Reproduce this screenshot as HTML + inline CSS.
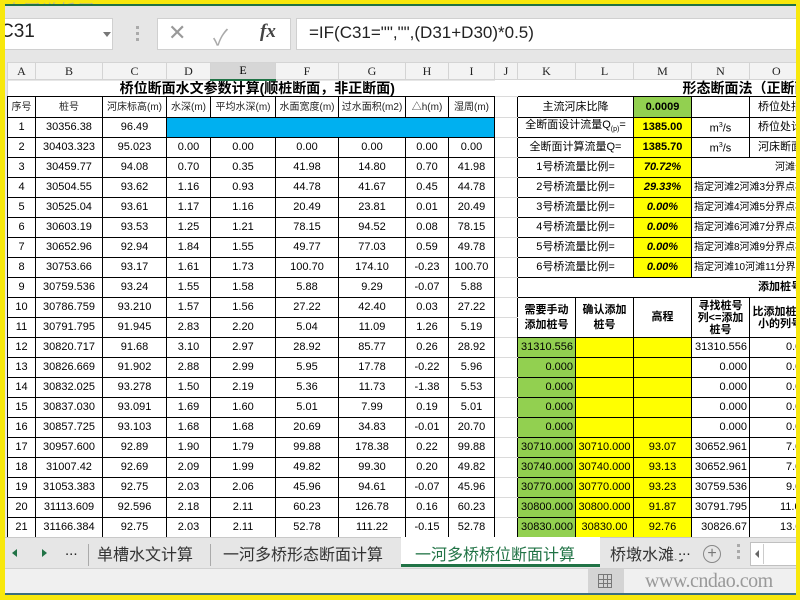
<!DOCTYPE html>
<html><head><meta charset="utf-8">
<style>
*{box-sizing:border-box}
body{margin:0;width:800px;height:600px;overflow:hidden;background:#f8e80c;font-family:"Liberation Sans","Noto Sans CJK SC",sans-serif;position:relative}
#app{position:absolute;left:5px;top:4px;width:791px;height:591px;background:#e6e6e6;overflow:hidden}
.abs{position:absolute}
table{border-collapse:collapse;table-layout:fixed;position:absolute;left:2px;top:58px;width:880px;font-size:11px;color:#000}
td{border:1px solid #000;padding:0 2px;white-space:nowrap;overflow:hidden;text-align:center;background:#fff;font-family:"Liberation Sans","Noto Sans CJK SC",sans-serif;line-height:13px;height:20px}
tr.ch td{height:17px;background:#f3f3f3;border:1px solid #d4d4d4;font-family:"Liberation Serif",serif;font-size:12px;color:#222}
tr.ch td.sel{background:#d6d6d6;border-bottom:2px solid #217346;color:#000}
tr.tt td{height:17px;border-top:none;border-left:none;border-right:none;font-weight:bold;font-size:14px;line-height:14px}
tr.hd td{height:21px}
tr.hd td.h{font-size:10px;color:#222}
td.j{border-left:none;border-right:none;border-top:1px solid #dadada;border-bottom:1px solid #dadada}
td.g{background:#92d050}
td.y{background:#ffff00}
td.b{background:#00b0f0}
td.r{text-align:right}
td.l{text-align:left}
td.bd{font-weight:bold}
td.it{font-weight:bold;font-style:italic}
td.s{font-size:10px}
td.lb{font-size:11px}
</style></head><body>
<div class="abs" style="left:6px;top:0;font-family:'Noto Serif CJK SC',serif;font-size:16px;color:#aaa;letter-spacing:2px;line-height:20px">中国道桥网</div>
<div id="app">
  <div class="abs" style="left:0;top:0;width:791px;height:2px;background:#217346"></div>
  <div class="abs" style="left:0;top:14px;width:108px;height:32px;background:#fff;border:1px solid #d0d0d0;border-left:none"></div>
  <div class="abs" style="left:-5px;top:17px;font-size:19px;color:#222">C31</div>
  <div class="abs" style="left:98px;top:28px;width:0;height:0;border-left:4px solid transparent;border-right:4px solid transparent;border-top:5px solid #777"></div>
  <div class="abs" style="left:131px;top:22px;width:3px;height:18px;background:repeating-linear-gradient(#aaa 0 3px,transparent 3px 6px)"></div>
  <div class="abs" style="left:152px;top:14px;width:134px;height:32px;background:#fff;border:1px solid #d0d0d0"></div>
  <div class="abs" style="left:163px;top:16px;font-size:22px;color:#999">✕</div>
  <div class="abs" style="left:208px;top:16px;font-size:22px;color:#aaa">✓</div>
  <div class="abs" style="left:255px;top:17px;font-size:19px;font-style:italic;font-weight:bold;font-family:'Liberation Serif',serif;color:#444">fx</div>
  <div class="abs" style="left:291px;top:14px;width:510px;height:32px;background:#fff;border:1px solid #d0d0d0"></div>
  <div class="abs" style="left:304px;top:19px;font-size:17px;color:#222">=IF(C31="","",(D31+D30)*0.5)</div>

<table>
<colgroup><col style="width:28px"><col style="width:67px"><col style="width:64px"><col style="width:44px"><col style="width:65px"><col style="width:63px"><col style="width:67px"><col style="width:43px"><col style="width:46px"><col style="width:23px"><col style="width:58px"><col style="width:58px"><col style="width:58px"><col style="width:58px"><col style="width:138px"></colgroup>
<tr class="ch"><td>A</td><td>B</td><td>C</td><td>D</td><td class="sel">E</td><td>F</td><td>G</td><td>H</td><td>I</td><td>J</td><td>K</td><td>L</td><td>M</td><td>N</td><td style="text-align:left;padding-left:22px">O</td></tr>
<tr class="tt"><td colspan="9" style="border-left:1px solid #d4d4d4;padding-left:14px">桥位断面水文参数计算(顺桩断面，非正断面)</td><td class="j" style="border-top:none"></td><td colspan="5" style="text-align:left;padding-left:165px">形态断面法（正断面法）</td></tr>
<tr class="hd"><td class="h">序号</td><td class="h">桩号</td><td class="h">河床标高(m)</td><td class="h">水深(m)</td><td class="h">平均水深(m)</td><td class="h">水面宽度(m)</td><td class="h">过水面积(m2)</td><td class="h">△h(m)</td><td class="h">湿周(m)</td><td class="j"></td><td colspan="2" class="lb">主流河床比降</td><td class="g bd">0.0009</td><td></td><td class="l lb" style="padding-left:8px">桥位处指定</td></tr>
<tr><td>1</td><td>30356.38</td><td>96.49</td><td colspan="6" class="b"></td><td class="j"></td><td colspan="2" class="lb">全断面设计流量Q<sub style="font-size:7px">(p)</sub>=</td><td class="y bd">1385.00</td><td>m<sup style="font-size:7px">3</sup>/s</td><td class="l lb" style="padding-left:8px">桥位处计算</td></tr>
<tr><td>2</td><td>30403.323</td><td>95.023</td><td>0.00</td><td>0.00</td><td>0.00</td><td>0.00</td><td>0.00</td><td>0.00</td><td class="j"></td><td colspan="2" class="lb">全断面计算流量Q=</td><td class="y bd">1385.70</td><td>m<sup style="font-size:7px">3</sup>/s</td><td class="l lb" style="padding-left:8px">河床断面</td></tr>
<tr><td>3</td><td>30459.77</td><td>94.08</td><td>0.70</td><td>0.35</td><td>41.98</td><td>14.80</td><td>0.70</td><td>41.98</td><td class="j"></td><td colspan="2" class="lb">1号桥流量比例=</td><td class="y it">70.72%</td><td colspan="2" class="l s" style="padding-left:83px">河滩分界</td></tr>
<tr><td>4</td><td>30504.55</td><td>93.62</td><td>1.16</td><td>0.93</td><td>44.78</td><td>41.67</td><td>0.45</td><td>44.78</td><td class="j"></td><td colspan="2" class="lb">2号桥流量比例=</td><td class="y it">29.33%</td><td colspan="2" class="l s">指定河滩2河滩3分界点桩号</td></tr>
<tr><td>5</td><td>30525.04</td><td>93.61</td><td>1.17</td><td>1.16</td><td>20.49</td><td>23.81</td><td>0.01</td><td>20.49</td><td class="j"></td><td colspan="2" class="lb">3号桥流量比例=</td><td class="y it">0.00%</td><td colspan="2" class="l s">指定河滩4河滩5分界点桩号</td></tr>
<tr><td>6</td><td>30603.19</td><td>93.53</td><td>1.25</td><td>1.21</td><td>78.15</td><td>94.52</td><td>0.08</td><td>78.15</td><td class="j"></td><td colspan="2" class="lb">4号桥流量比例=</td><td class="y it">0.00%</td><td colspan="2" class="l s">指定河滩6河滩7分界点桩号</td></tr>
<tr><td>7</td><td>30652.96</td><td>92.94</td><td>1.84</td><td>1.55</td><td>49.77</td><td>77.03</td><td>0.59</td><td>49.78</td><td class="j"></td><td colspan="2" class="lb">5号桥流量比例=</td><td class="y it">0.00%</td><td colspan="2" class="l s">指定河滩8河滩9分界点桩号</td></tr>
<tr><td>8</td><td>30753.66</td><td>93.17</td><td>1.61</td><td>1.73</td><td>100.70</td><td>174.10</td><td>-0.23</td><td>100.70</td><td class="j"></td><td colspan="2" class="lb">6号桥流量比例=</td><td class="y it">0.00%</td><td colspan="2" class="l s">指定河滩10河滩11分界桩号</td></tr>
<tr><td>9</td><td>30759.536</td><td>93.24</td><td>1.55</td><td>1.58</td><td>5.88</td><td>9.29</td><td>-0.07</td><td>5.88</td><td class="j"></td><td colspan="5" class="l bd" style="padding-left:240px">添加桩号</td></tr>
<tr><td>10</td><td>30786.759</td><td>93.210</td><td>1.57</td><td>1.56</td><td>27.22</td><td>42.40</td><td>0.03</td><td>27.22</td><td class="j"></td>
 <td rowspan="2" style="font-weight:bold;white-space:normal;line-height:15px">需要手动添加桩号</td><td rowspan="2" style="font-weight:bold;white-space:normal;line-height:15px">确认添加桩号</td><td rowspan="2" class="bd">高程</td><td rowspan="2" style="font-weight:bold;white-space:normal;line-height:12px;padding:0 4px">寻找桩号列&lt;=添加桩号</td><td rowspan="2" class="l" style="font-weight:bold;white-space:normal;line-height:12px;padding:0"><div style="width:60px;text-align:center">比添加桩号小的列号</div></td></tr>
<tr><td>11</td><td>30791.795</td><td>91.945</td><td>2.83</td><td>2.20</td><td>5.04</td><td>11.09</td><td>1.26</td><td>5.19</td><td class="j"></td></tr>
<tr><td>12</td><td>30820.717</td><td>91.68</td><td>3.10</td><td>2.97</td><td>28.92</td><td>85.77</td><td>0.26</td><td>28.92</td><td class="j"></td><td class="g r">31310.556</td><td class="y"></td><td class="y"></td><td class="r">31310.556</td><td class="l" style="padding-left:36px">0.00</td></tr>
<tr><td>13</td><td>30826.669</td><td>91.902</td><td>2.88</td><td>2.99</td><td>5.95</td><td>17.78</td><td>-0.22</td><td>5.96</td><td class="j"></td><td class="g r">0.000</td><td class="y"></td><td class="y"></td><td class="r">0.000</td><td class="l" style="padding-left:36px">0.00</td></tr>
<tr><td>14</td><td>30832.025</td><td>93.278</td><td>1.50</td><td>2.19</td><td>5.36</td><td>11.73</td><td>-1.38</td><td>5.53</td><td class="j"></td><td class="g r">0.000</td><td class="y"></td><td class="y"></td><td class="r">0.000</td><td class="l" style="padding-left:36px">0.00</td></tr>
<tr><td>15</td><td>30837.030</td><td>93.091</td><td>1.69</td><td>1.60</td><td>5.01</td><td>7.99</td><td>0.19</td><td>5.01</td><td class="j"></td><td class="g r">0.000</td><td class="y"></td><td class="y"></td><td class="r">0.000</td><td class="l" style="padding-left:36px">0.00</td></tr>
<tr><td>16</td><td>30857.725</td><td>93.103</td><td>1.68</td><td>1.68</td><td>20.69</td><td>34.83</td><td>-0.01</td><td>20.70</td><td class="j"></td><td class="g r">0.000</td><td class="y"></td><td class="y"></td><td class="r">0.000</td><td class="l" style="padding-left:36px">0.00</td></tr>
<tr><td>17</td><td>30957.600</td><td>92.89</td><td>1.90</td><td>1.79</td><td>99.88</td><td>178.38</td><td>0.22</td><td>99.88</td><td class="j"></td><td class="g r">30710.000</td><td class="y">30710.000</td><td class="y">93.07</td><td class="r">30652.961</td><td class="l" style="padding-left:36px">7.00</td></tr>
<tr><td>18</td><td>31007.42</td><td>92.69</td><td>2.09</td><td>1.99</td><td>49.82</td><td>99.30</td><td>0.20</td><td>49.82</td><td class="j"></td><td class="g r">30740.000</td><td class="y">30740.000</td><td class="y">93.13</td><td class="r">30652.961</td><td class="l" style="padding-left:36px">7.00</td></tr>
<tr><td>19</td><td>31053.383</td><td>92.75</td><td>2.03</td><td>2.06</td><td>45.96</td><td>94.61</td><td>-0.07</td><td>45.96</td><td class="j"></td><td class="g r">30770.000</td><td class="y">30770.000</td><td class="y">93.23</td><td class="r">30759.536</td><td class="l" style="padding-left:36px">9.00</td></tr>
<tr><td>20</td><td>31113.609</td><td>92.596</td><td>2.18</td><td>2.11</td><td>60.23</td><td>126.78</td><td>0.16</td><td>60.23</td><td class="j"></td><td class="g r">30800.000</td><td class="y">30800.000</td><td class="y">91.87</td><td class="r">30791.795</td><td class="l" style="padding-left:30px">11.00</td></tr>
<tr><td>21</td><td>31166.384</td><td>92.75</td><td>2.03</td><td>2.11</td><td>52.78</td><td>111.22</td><td>-0.15</td><td>52.78</td><td class="j"></td><td class="g r">30830.000</td><td class="y">30830.00</td><td class="y">92.76</td><td class="r">30826.67</td><td class="l" style="padding-left:30px">13.00</td></tr>
<tr><td>22</td><td>31200.000</td><td>92.80</td><td>2.00</td><td>2.00</td><td>50.00</td><td>100.00</td><td>0.00</td><td>50.00</td><td class="j"></td><td class="g r">30860.000</td><td class="y">30860.00</td><td class="y">92.80</td><td class="r">30857.73</td><td class="l" style="padding-left:30px">15.00</td></tr>
</table>

  <div class="abs" style="left:0;top:533px;width:791px;height:31px;background:#e6e6e6;border-top:1px solid #c8c8c8"></div>
  <div class="abs" style="left:7px;top:545px;width:0;height:0;border-top:4px solid transparent;border-bottom:4px solid transparent;border-right:5px solid #217346"></div>
  <div class="abs" style="left:37px;top:545px;width:0;height:0;border-top:4px solid transparent;border-bottom:4px solid transparent;border-left:5px solid #217346"></div>
  <div class="abs" style="left:60px;top:538px;font-size:15px;color:#222">...</div>
  <div class="abs" style="left:83px;top:540px;width:1px;height:22px;background:#aaa"></div>
  <div class="abs" style="left:92px;top:537px;font-size:16px;color:#333">单槽水文计算</div>
  <div class="abs" style="left:205px;top:540px;width:1px;height:22px;background:#aaa"></div>
  <div class="abs" style="left:218px;top:537px;font-size:16px;color:#333">一河多桥形态断面计算</div>
  <div class="abs" style="left:396px;top:533px;width:199px;height:30px;background:#fff;border-bottom:3px solid #217346"></div>
  <div class="abs" style="left:410px;top:537px;font-size:16px;color:#217346">一河多桥桥位断面计算</div>
  <div class="abs" style="left:605px;top:537px;width:75px;height:24px;overflow:hidden;font-size:16px;color:#333;white-space:nowrap">桥墩水滩水</div>
  <div class="abs" style="left:670px;top:538px;font-size:15px;color:#222;background:#e6e6e6;padding-left:3px">...</div>
  <div class="abs" style="left:698px;top:541px;width:18px;height:18px;border:1.5px solid #888;border-radius:50%;text-align:center;line-height:15px;font-size:16px;color:#777">+</div>
  <div class="abs" style="left:732px;top:540px;width:3px;height:18px;background:repeating-linear-gradient(#aaa 0 3px,transparent 3px 6px)"></div>
  <div class="abs" style="left:745px;top:538px;width:50px;height:24px;background:#fff;border:1px solid #c0c0c0"></div>
  <div class="abs" style="left:750px;top:546px;width:0;height:0;border-top:4px solid transparent;border-bottom:4px solid transparent;border-right:4px solid #666"></div>
  <div class="abs" style="left:758px;top:540px;width:1px;height:20px;background:#ccc"></div>
  <div class="abs" style="left:0;top:564px;width:791px;height:25px;background:#f0f0f0;border-top:1px solid #d0d0d0"></div>
  <div class="abs" style="left:583px;top:565px;width:36px;height:24px;background:#d4d4d4"></div>
  <div class="abs" style="left:593px;top:570px;width:14px;height:14px;border:1px solid #777;background:linear-gradient(90deg,transparent 4px,#777 4px 5px,transparent 5px 8px,#777 8px 9px,transparent 9px),linear-gradient(transparent 4px,#777 4px 5px,transparent 5px 8px,#777 8px 9px,transparent 9px)"></div>
  <div class="abs" style="left:640px;top:566px;font-family:'Liberation Serif',serif;font-size:20px;color:#999;letter-spacing:-0.5px">www.cndao.com</div>
  <div class="abs" style="left:0;top:589px;width:791px;height:2px;background:#3b6e7e"></div>
</div>
</body></html>
